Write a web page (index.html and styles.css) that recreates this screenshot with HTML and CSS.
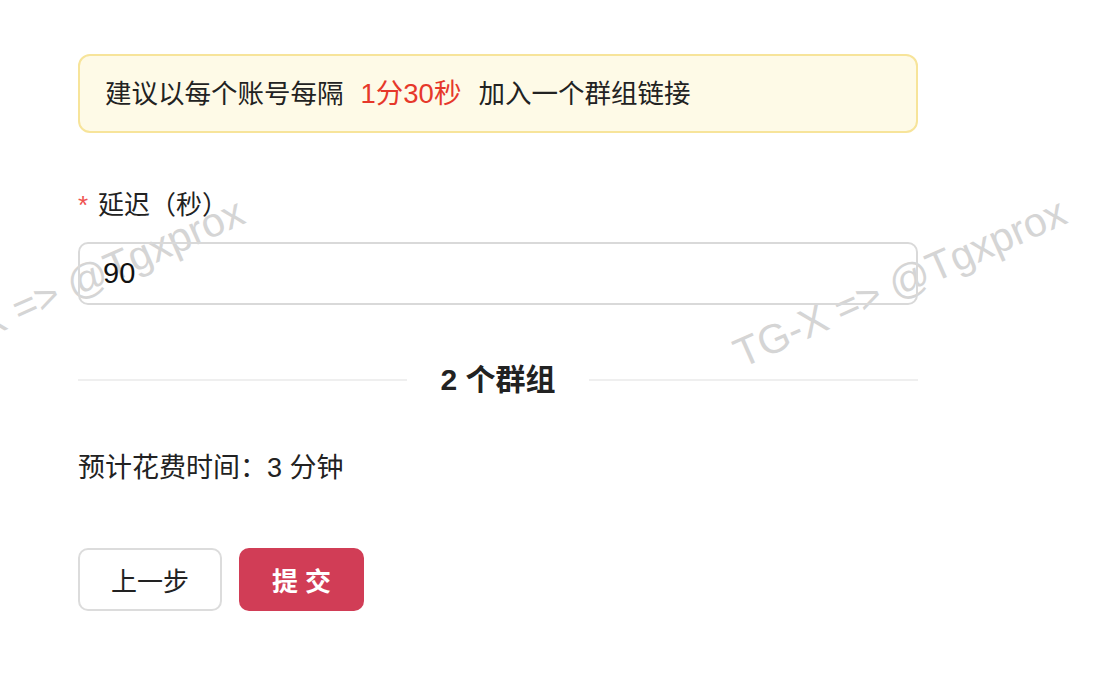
FILE: index.html
```html
<!DOCTYPE html>
<html lang="zh-CN">
<head>
    <meta charset="UTF-8">
    <meta name="viewport" content="width=device-width, initial-scale=1.0">
    <title>加入群组</title>
    <link rel="stylesheet" href="styles.css">
</head>
<body>
    <div class="page">
        <div class="alert">建议以每个账号每隔<span class="alert-red">1分30秒</span>加入一个群组链接</div>

        <form class="join-form">
            <label class="field-label" for="delay"><span class="required">*</span>延迟（秒）</label>
            <input class="field-input" type="text" id="delay" name="delay" value="90">

            <div class="divider">
                <span class="divider-line"></span>
                <span class="divider-text">2 个群组</span>
                <span class="divider-line"></span>
            </div>

            <p class="estimate">预计花费时间：3 分钟</p>

            <div class="actions">
                <button type="button" class="btn btn-default">上一步</button>
                <button type="button" class="btn btn-primary">提 交</button>
            </div>
        </form>
    </div>

    <span class="watermark wm-left">TG-X =&gt; @Tgxprox</span>
    <span class="watermark wm-right">TG-X =&gt; @Tgxprox</span>
</body>
</html>
```

FILE: styles.css
```css
body {
    margin: 0;
    font-family: "Liberation Sans", "Noto Sans CJK SC", sans-serif;
    color: #222;
    background: #fff;
    overflow: hidden;
}

.page {
    width: 840px;
    padding: 54px 0 0 78px;
}

.alert {
    border: 2px solid #f7e49a;
    background-color: #fefae7;
    border-radius: 12px;
    padding: 20px 25px 19px;
    font-size: 26.5px;
    line-height: 36px;
}

.alert-red {
    color: #e6382b;
    font-size: 27.5px;
    margin: 0 17px;
}

.join-form {
    margin-top: 54px;
}

.field-label {
    display: block;
    font-size: 26px;
    line-height: 36px;
}

.required {
    display: inline-block;
    width: 20px;
    color: #ef5350;
}

.field-input {
    display: block;
    box-sizing: border-box;
    width: 100%;
    height: 63px;
    margin-top: 19px;
    padding: 0 23px;
    border: 2px solid #d9d9d9;
    border-radius: 10px;
    font-family: inherit;
    font-size: 29px;
    color: #111;
    outline: none;
    background: transparent;
}

.divider {
    display: flex;
    align-items: center;
    margin-top: 57px;
}

.divider-line {
    flex: 1;
    height: 2px;
    background-color: #efefef;
}

.divider-text {
    margin: 0 33px;
    font-size: 30px;
    font-weight: 600;
    line-height: 36px;
}

.estimate {
    margin: 52px 0 0;
    font-size: 27px;
    line-height: 36px;
}

.actions {
    display: flex;
    gap: 17px;
    margin-top: 62px;
}

.btn {
    height: 63px;
    border-radius: 10px;
    font-family: inherit;
    font-size: 26px;
    cursor: pointer;
}

.btn-default {
    width: 144px;
    border: 2px solid #dcdcdc;
    background-color: #fff;
    color: #222;
}

.btn-primary {
    width: 125px;
    border: none;
    background-color: #d13d56;
    color: #fff;
    font-weight: 600;
}

.watermark {
    position: absolute;
    z-index: -1;
    top: 283px;
    font-family: "Liberation Sans", sans-serif;
    font-size: 41px;
    color: #d5d5d5;
    white-space: nowrap;
    pointer-events: none;
    transform: translate(-50%, -50%) rotate(-24deg);
}

.wm-left {
    left: 78px;
}

.wm-right {
    left: 900px;
}
```
